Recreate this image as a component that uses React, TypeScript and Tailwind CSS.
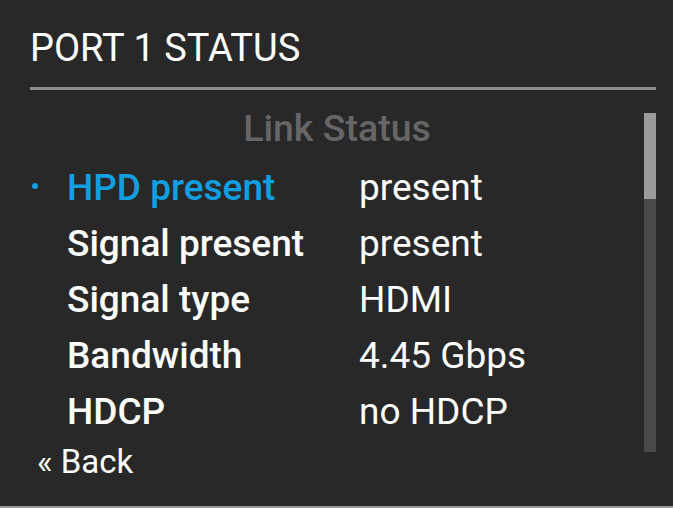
const rows = [
  { label: 'HPD present', value: 'present', active: true },
  { label: 'Signal present', value: 'present', active: false },
  { label: 'Signal type', value: 'HDMI', active: false },
  { label: 'Bandwidth', value: '4.45 Gbps', active: false },
  { label: 'HDCP', value: 'no HDCP', active: false },
];

export default function App() {
  return (
    <div className="flex h-[508px] w-[673px] flex-col overflow-hidden border-b-2 border-[#9a9a9a] bg-[#282828] pr-[17px] pl-[30px] font-['Roboto',sans-serif] text-white">
      <h1 className="pt-[27px] text-[38px] leading-[42px] font-normal">PORT 1 STATUS</h1>
      <div className="mt-[18px] h-[3px] bg-[#8c8c8c]" />

      <div className="mt-[10px] flex h-[340px]">
        <div className="flex-1">
          <div className="text-center text-[37.5px] leading-[56px] font-medium text-[#666666]">Link Status</div>
          <div className="mt-[4px]">
            {rows.map((row) => (
              <div key={row.label} className="grid grid-cols-[37px_292px_1fr] items-center text-[37px] leading-[56px]">
                <span className="flex items-center">
                  {row.active && <span className="mb-[5px] ml-[2px] h-[6px] w-[6px] rounded-full bg-[#129fe0]" />}
                </span>
                <span className={row.active ? 'font-medium text-[#129fe0]' : 'font-medium'}>{row.label}</span>
                <span>{row.value}</span>
              </div>
            ))}
          </div>
        </div>
        <div className="mt-[13px] flex h-[339px] w-[12px] flex-col bg-[#4a4a4a]">
          <div className="h-[86px] bg-[#9b9b9b]" />
        </div>
      </div>

      <button className="mt-[2px] self-start pl-[7px] text-[33px] leading-[40px]">« Back</button>
    </div>
  );
}
